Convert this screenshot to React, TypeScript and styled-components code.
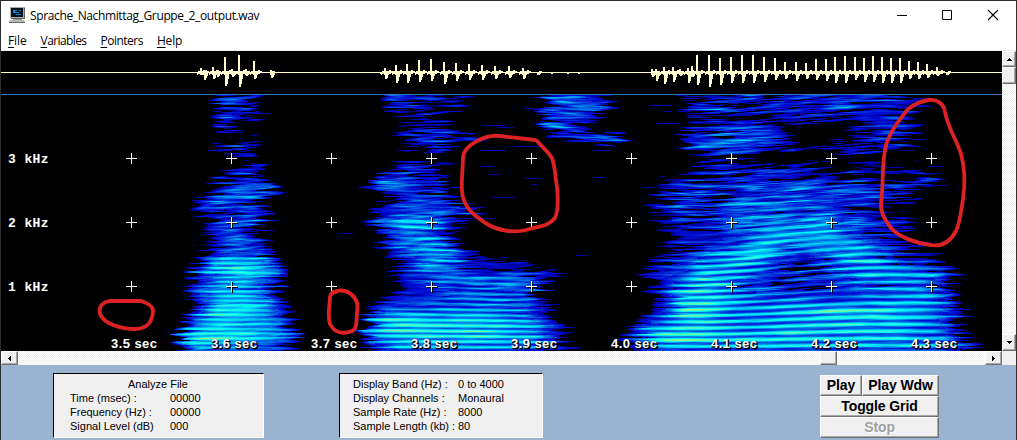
import React from "react";
import styled, { createGlobalStyle, css } from "styled-components";

const GlobalStyle = createGlobalStyle`
  * { box-sizing: border-box; }
  body { margin: 0; overflow: hidden; background: #fff; }
`;

/* ---------- Spectrogram model ---------- */

// Each row: frequency line y, followed by x,level pairs.
type Row = number[];

const wordOne: Row[] = [
  [95, 208, 0, 225, 0.35, 255, 0.35, 263, 0],
  [105, 210, 0, 225, 0.42, 250, 0.45, 265, 0],
  [114, 212, 0, 230, 0.5, 255, 0.52, 271, 0],
  [124, 212, 0, 225, 0.42, 240, 0.35, 256, 0],
  [128, 215, 0, 230, 0.15, 250, 0],
  [132, 216, 0, 230, 0.42, 250, 0.38, 258, 0],
  [138, 220, 0, 230, 0.05, 250, 0],
  [144, 213, 0, 225, 0.5, 250, 0.5, 263, 0],
  [153, 213, 0, 230, 0.42, 245, 0.4, 255, 0],
  [160, 228, 0, 240, 0.12, 250, 0.2, 262, 0],
  [172, 220, 0, 235, 0.4, 255, 0.42, 262, 0],
  [180, 204, 0, 220, 0.5, 250, 0.58, 266, 0.55, 275, 0],
  [188, 208, 0, 225, 0.55, 245, 0.68, 270, 0.62, 281, 0],
  [196, 198, 0, 215, 0.6, 235, 0.7, 250, 0.65, 262, 0.5, 275, 0],
  [203, 190, 0, 205, 0.55, 232, 0.7, 250, 0.55, 268, 0],
  [212, 192, 0, 210, 0.52, 240, 0.6, 262, 0.45, 275, 0],
  [222, 196, 0, 215, 0.55, 245, 0.6, 270, 0],
  [235, 200, 0, 215, 0.5, 240, 0.6, 268, 0],
  [250, 198, 0, 212, 0.5, 235, 0.66, 260, 0.6, 282, 0],
  [262, 196, 0, 210, 0.62, 230, 0.9, 250, 0.9, 270, 0.7, 290, 0],
  [270, 183, 0, 195, 0.55, 215, 0.88, 240, 1.05, 255, 0.95, 275, 0.6, 290, 0],
  [285, 182, 0, 195, 0.55, 215, 0.75, 240, 0.85, 260, 0.68, 285, 0],
  [300, 185, 0, 200, 0.6, 220, 0.95, 245, 0.95, 270, 0.7, 292, 0],
  [310, 185, 0, 200, 0.62, 217, 1.05, 250, 1.05, 275, 0.8, 288, 0.6, 298, 0],
  [322, 178, 0, 190, 0.7, 215, 0.93, 240, 0.9, 275, 0.7, 297, 0],
  [338, 175, 0, 181, 0.8, 198, 1.12, 235, 0.97, 270, 0.8, 290, 0.6, 299, 0],
  [350, 178, 0, 195, 0.7, 230, 0.65, 250, 0.7, 280, 0.55, 300, 0],
];

const wordTwo: Row[] = [
  [95, 376, 0, 390, 0.45, 410, 0.52, 430, 0.45, 470, 0.28, 490, 0],
  [108, 380, 0, 395, 0.48, 420, 0.5, 460, 0.3, 480, 0],
  [115, 392, 0, 405, 0.25, 425, 0.3, 440, 0],
  [124, 395, 0, 410, 0.42, 440, 0.44, 468, 0],
  [134, 388, 0, 410, 0.42, 440, 0.48, 465, 0.32, 480, 0],
  [141, 400, 0, 425, 0.44, 450, 0.44, 475, 0.42, 495, 0],
  [150, 388, 0, 415, 0.42, 440, 0.42, 448, 0],
  [155, 400, 0, 420, 0, 450, 0],
  [161, 375, 0, 400, 0.24, 440, 0.24, 475, 0],
  [168, 382, 0, 410, 0.32, 430, 0.28, 440, 0],
  [173, 374, 0, 385, 0.4, 400, 0.54, 430, 0.48, 452, 0],
  [179, 366, 0, 380, 0.52, 410, 0.6, 440, 0.45, 448, 0],
  [187, 365, 0, 385, 0.6, 408, 0.72, 430, 0.5, 460, 0],
  [194, 380, 0, 395, 0.5, 415, 0.65, 440, 0.42, 455, 0],
  [203, 375, 0, 390, 0.52, 415, 0.65, 445, 0.48, 482, 0],
  [212, 367, 0, 380, 0.55, 405, 0.74, 435, 0.66, 465, 0.32, 492, 0],
  [224, 358, 0, 380, 0.7, 405, 0.88, 425, 0.78, 450, 0.4, 478, 0],
  [234, 376, 0, 390, 0.62, 410, 0.83, 435, 0.72, 462, 0],
  [245, 376, 0, 395, 0.52, 425, 0.82, 445, 0.7, 466, 0],
  [255, 373, 0, 395, 0.44, 430, 0.8, 450, 0.7, 475, 0.2, 500, 0.1, 540, 0],
  [263, 376, 0, 395, 0.4, 430, 0.8, 452, 0.72, 480, 0.35, 520, 0.35, 545, 0],
  [272, 378, 0, 400, 0.28, 430, 0.74, 460, 0.7, 490, 0.4, 530, 0.52, 550, 0.5, 570, 0],
  [280, 380, 0, 410, 0.3, 440, 0.7, 470, 0.72, 510, 0.62, 530, 0.65, 555, 0],
  [292, 372, 0, 400, 0.36, 430, 0.54, 460, 0.76, 500, 0.76, 530, 0.65, 547, 0],
  [302, 368, 0, 385, 0.5, 410, 0.6, 450, 0.72, 490, 0.8, 530, 0.65, 552, 0],
  [312, 362, 0, 375, 0.64, 390, 0.78, 430, 0.84, 480, 0.84, 530, 0.75, 562, 0],
  [322, 360, 0, 372, 0.85, 390, 1.1, 420, 1.1, 480, 1.05, 530, 0.88, 555, 0.52, 572, 0],
  [338, 358, 0, 372, 0.8, 400, 1, 480, 1.03, 530, 0.92, 555, 0.6, 572, 0],
  [350, 358, 0, 375, 0.5, 400, 0.82, 530, 0.8, 555, 0.5, 592, 0],
];

const fricative: Row[] = [
  [95, 538, 0, 550, 0.52, 575, 0.65, 600, 0.54, 614, 0],
  [108, 535, 0, 550, 0.58, 575, 0.62, 600, 0.54, 622, 0],
  [118, 535, 0, 550, 0.52, 570, 0.52, 612, 0],
  [128, 534, 0, 550, 0.54, 570, 0.54, 592, 0],
  [134, 540, 0, 565, 0.52, 600, 0.48, 618, 0.52, 629, 0],
  [139, 545, 0, 580, 0.48, 610, 0.54, 631, 0],
  [144, 585, 0, 605, 0.42, 626, 0],
  [149, 590, 0, 605, 0, 620, 0],
];

const wordThree: Row[] = [
  [95, 665, 0, 690, 0.4, 720, 0.48, 780, 0.48, 830, 0.55, 870, 0.48, 910, 0.25, 935, 0],
  [108, 667, 0, 690, 0.45, 720, 0.5, 760, 0.5, 810, 0.56, 850, 0.58, 880, 0.5, 910, 0.38, 932, 0],
  [116, 678, 0, 700, 0.28, 740, 0.32, 780, 0.28, 820, 0.48, 850, 0.48, 900, 0.3, 935, 0],
  [126, 680, 0, 700, 0.42, 720, 0.5, 760, 0.48, 795, 0.2, 815, 0, 835, 0, 860, 0.32, 900, 0.42, 932, 0],
  [139, 677, 0, 690, 0.58, 720, 0.62, 750, 0.64, 770, 0.56, 800, 0.12, 820, 0, 850, 0.3, 880, 0.44, 932, 0],
  [147, 676, 0, 690, 0.62, 740, 0.62, 770, 0.46, 800, 0.15, 820, 0.15, 860, 0.4, 890, 0.38, 920, 0],
  [154, 683, 0, 705, 0.3, 730, 0.38, 760, 0.2, 800, 0.1, 850, 0.28, 900, 0.22, 944, 0],
  [162, 683, 0, 710, 0.38, 730, 0.3, 760, 0.17, 800, 0.1, 840, 0.22, 880, 0.18, 930, 0.1, 945, 0],
  [172, 680, 0, 700, 0.42, 730, 0.48, 770, 0.48, 800, 0.42, 840, 0.32, 870, 0.2, 920, 0.24, 942, 0],
  [184, 643, 0, 665, 0.42, 700, 0.5, 740, 0.56, 800, 0.64, 840, 0.55, 880, 0.45, 920, 0.46, 950, 0],
  [195, 645, 0, 670, 0.5, 700, 0.56, 750, 0.58, 800, 0.64, 850, 0.58, 890, 0.5, 910, 0.3, 937, 0],
  [207, 643, 0, 670, 0.48, 720, 0.6, 760, 0.7, 820, 0.68, 860, 0.5, 890, 0.32, 922, 0],
  [220, 640, 0, 665, 0.4, 710, 0.56, 760, 0.78, 820, 0.78, 855, 0.6, 890, 0.36, 925, 0],
  [232, 652, 0, 680, 0.38, 730, 0.6, 775, 0.88, 830, 0.86, 855, 0.65, 880, 0.42, 910, 0.2, 928, 0],
  [245, 652, 0, 680, 0.38, 720, 0.66, 765, 1.0, 790, 0.78, 825, 0.84, 850, 0.94, 870, 0.7, 900, 0.4, 945, 0],
  [258, 643, 0, 670, 0.42, 700, 0.72, 745, 1.08, 780, 0.72, 800, 0.5, 830, 0.75, 850, 1.02, 880, 0.88, 910, 0.5, 955, 0],
  [272, 633, 0, 655, 0.52, 680, 0.72, 705, 1.08, 750, 0.85, 790, 0.5, 820, 0.5, 860, 0.9, 900, 0.96, 935, 0.78, 966, 0],
  [286, 638, 0, 660, 0.5, 680, 0.88, 700, 1.1, 740, 0.76, 790, 0.48, 830, 0.56, 870, 0.72, 920, 0.84, 945, 0.6, 962, 0],
  [300, 645, 0, 670, 0.62, 682, 1.08, 715, 1.08, 760, 0.78, 830, 0.76, 880, 0.82, 920, 0.88, 945, 0.7, 964, 0],
  [311, 638, 0, 672, 0.8, 685, 1.18, 708, 1.18, 730, 0.88, 800, 0.98, 830, 1.14, 880, 1.1, 920, 0.95, 950, 0.7, 974, 0],
  [325, 626, 0, 645, 0.74, 670, 0.92, 690, 1.02, 740, 0.9, 820, 0.97, 900, 0.95, 940, 0.75, 967, 0],
  [338, 596, 0, 635, 0.66, 655, 1.14, 685, 1.2, 720, 1.02, 900, 1, 950, 0.82, 980, 0],
  [350, 590, 0, 640, 0.45, 670, 0.86, 930, 0.9, 965, 0.7, 985, 0],
];

const levelInRow = (row: Row, x: number) => {
  const last = row.length - 2;
  if (x <= row[1] || x >= row[last]) return 0;
  for (let i = 1; i < last; i += 2) {
    if (x < row[i + 2]) {
      const t = (x - row[i]) / (row[i + 2] - row[i]);
      return row[i + 1] + (row[i + 3] - row[i + 1]) * t;
    }
  }
  return 0;
};

const levelAt = (rows: Row[], x: number, y: number) => {
  if (y > rows[rows.length - 1][0]) return 0;
  for (let i = 0; i < rows.length - 1; i++) {
    if (y <= rows[i + 1][0]) {
      const t = (y - rows[i][0]) / (rows[i + 1][0] - rows[i][0]);
      return levelInRow(rows[i], x) * (1 - t) + levelInRow(rows[i + 1], x) * t;
    }
  }
  return 0;
};

const hash = (a: number, b: number) => {
  let h = Math.imul(a | 0, 374761393) + Math.imul(b | 0, 668265263);
  h = Math.imul(h ^ (h >>> 13), 1274126177);
  return ((h ^ (h >>> 16)) >>> 0) / 4294967295;
};

const streak = (x: number, row: number, size: number) => {
  const sx = x / size + hash(row, 91) * 9;
  const i = Math.floor(sx);
  const t = sx - i;
  const s = t * t * (3 - 2 * t);
  return hash(i, row) * (1 - s) + hash(i + 1, row) * s;
};

const smoothStreak = (x: number, y: number, size: number) => {
  const j = Math.floor(y);
  const t = y - j;
  const s = t * t * (3 - 2 * t);
  return streak(x, j, size) * (1 - s) + streak(x, j + 1, size) * s;
};

const mix = (stops: number[][], v: number) => {
  for (let i = 1; i < stops.length; i++) {
    if (v <= stops[i][0]) {
      const t = (v - stops[i - 1][0]) / (stops[i][0] - stops[i - 1][0]);
      const c = [1, 2, 3].map((k) => Math.round(stops[i - 1][k] + (stops[i][k] - stops[i - 1][k]) * t));
      return `rgb(${c.join(",")})`;
    }
  }
  return "rgb(180,240,110)";
};

const palette = [
  [0, 0, 0, 0],
  [0.08, 0, 0, 80],
  [0.2, 0, 0, 180],
  [0.36, 0, 14, 214],
  [0.52, 0, 66, 222],
  [0.68, 0, 122, 230],
  [0.83, 0, 190, 242],
  [0.97, 0, 242, 250],
  [1.1, 50, 255, 215],
  [1.25, 150, 245, 130],
];

const LEVELS = 40;

const buildSpectrum = () => {
  const paths: string[] = Array.from({ length: LEVELS + 1 }, () => "");
  for (let y = 95; y < 351; y++) {
    let runStart = 170;
    let runLevel = 0;
    for (let x = 170; x <= 1002; x++) {
      // Ragged outlines: every frequency line starts and ends a little differently.
      const px = x + (smoothStreak(x, y * 0.7 + 900, 70) - 0.5) * 24;
      let base = 0;
      let pitch = 4.7;
      let drift = 0;
      let depth = 0.3;
      if (x < 320) {
        base = levelAt(wordOne, px, y);
        drift = (x - 240) * 0.04;
      } else if (y < 152 && x > 515 && x < 648) {
        base = levelAt(fricative, px, y);
        drift = (x - 580) * -0.04;
        depth = 0.2;
      } else if (x < 600 && !(y > 325 && x > 588)) {
        base = levelAt(wordTwo, px, y);
        pitch = 5.5 - (x - 380) * 0.0018;
        depth = y > 285 ? 0.46 : 0.28;
        drift = (x - 400) * 0.02;
      } else {
        base = levelAt(wordThree, px, y);
        const u = Math.min(1, Math.max(0, (x - 690) / 190));
        pitch = 6.1 + 0.95 * u * u * (3 - 2 * u);
        depth = y > 255 ? 0.54 : 0.36;
        drift = u * u * (3 - 2 * u) * 9;
        // Upper harmonics flatten out so that the lines stay nearly level there.
        if (y < 250) pitch = 6.5 + (pitch - 6.5) * Math.max(0.3, 1 - (250 - y) / 60);
      }
      let v = 0;
      if (base > 0.01) {
        const wave = 0.5 + 0.5 * Math.cos((2 * Math.PI * (352 - y)) / pitch);
        const clarity = y > 290 ? 0.5 : y > 230 ? 0.72 : 0.92;
        const n =
          smoothStreak(x, (y + drift) * 0.55, 26) * 0.5 +
          smoothStreak(x + 400, (y + drift) * 0.98 + 500, 16) * 0.5;
        const edge = Math.min(1, base / 0.22);
        v =
          base +
          (n - 0.54) * 1.25 * clarity * (base > 0.8 ? 0.5 : base > 0.6 ? 0.75 : 1) -
          (1 - wave) * depth * (base > 0.7 ? 1 : 0.62) +
          (base > 0.75 ? 0.09 : base > 0.6 ? 0.04 : -0.02);
        v *= edge;
        if (v < 0.11) v = 0;
      }
      const level = x === 1002 ? -1 : Math.max(0, Math.min(LEVELS, Math.round((v / 1.25) * LEVELS)));
      if (level !== runLevel) {
        if (runLevel > 0) paths[runLevel] += `M${runStart} ${y}h${x - runStart}v1h${runStart - x}z`;
        runStart = x;
        runLevel = level;
      }
    }
  }
  return paths;
};

const spectrum = buildSpectrum();

// Isolated faint traces: x, y, length.
const traces = [
  [524, 108, 12], [484, 125, 22], [498, 127, 16], [480, 150, 26], [514, 146, 26], [594, 150, 15], [480, 166, 13], [489, 174, 10],
  [525, 178, 14], [593, 177, 12], [531, 184, 6], [491, 197, 24], [650, 105, 22], [663, 111, 9], [656, 123, 24], [652, 220, 20],
  [576, 255, 10], [339, 233, 14], [450, 187, 13], [932, 173, 10], [926, 185, 22],
  [460, 207, 26], [462, 218, 34], [455, 209, 20], [930, 166, 14],
];

/* ---------- Waveform ---------- */

// x position, peak above the axis, trough below the axis.
const pulses = [
  [201, 5, 2], [204, 3, 7], [213, 6, 6], [217, 3, 4], [225, 16, 13], [232, 4, 4], [239, 18, 14], [246, 4, 3], [254, 12, 6], [271, 3, 5],
  [385, 5, 6], [396, 8, 10], [407, 9, 10], [419, 13, 9], [431, 14, 8], [444, 11, 11], [456, 10, 8], [469, 9, 7], [482, 8, 7],
  [495, 7, 6], [509, 7, 5], [523, 5, 6], [538, 1, 2],
  [652, 4, 4], [656, 4, 8], [664, 6, 11], [673, 6, 9], [680, 4, 3], [688, 5, 10], [692, 7, 4], [697, 18, 12], [709, 18, 14], [720, 15, 12],
  [731, 16, 10], [742, 18, 10], [753, 18, 10], [764, 16, 9], [775, 15, 7], [785, 11, 6], [796, 11, 8], [806, 10, 6], [816, 14, 7],
  [826, 14, 8], [835, 16, 10], [845, 17, 10], [855, 16, 7], [864, 15, 9], [873, 17, 9], [882, 16, 10], [891, 15, 10], [900, 15, 10],
  [909, 12, 6], [918, 11, 6], [927, 9, 5], [937, 6, 3], [947, 1, 2],
];

const wavePath = pulses
  .map(([x, up, down]) => {
    const bits = [
      `M${x - 1} ${73 - up}h2v${up + 2}h-2z`,
      `M${x} 72h2v${down + 1}h-2z`,
      `M${x + 1} 71h2v${Math.ceil(down * 0.85) + 1}h-2z`,
      `M${x + 2} 71h2v${Math.ceil(down * 0.5) + 1}h-2z`,
    ];
    if (up > 4) {
      bits.push(`M${x + 4} 70h2v4h-2z`, `M${x - 3} 71h2v3h-2z`, `M${x + 6} 71h2v2h-2z`, `M${x - 4} 72h1v3h-1z`);
    }
    return bits.join("");
  })
  .join("");

const gridX = [131, 231, 331, 431, 531, 631, 731, 831, 931];
const gridY = [158, 222, 286];

const Plot = () => (
  <PlotSvg viewBox="1 51 1001 300">
    <rect x="1" y="51" width="1001" height="300" fill="#000" />
    <g shapeRendering="crispEdges">
      {spectrum.map((d, i) => (d ? <path key={i} d={d} fill={mix(palette, (i / LEVELS) * 1.25)} /> : null))}
      {traces.map(([x, y, w]) => (
        <path key={`${x}-${y}`} d={`M${x} ${y}h${w}v1h${-w}z`} fill="#0000b4" />
      ))}
      <path d="M1 72h1001v1H1zM380 73h2v1h-2zM551 73h2v1h-2zM567 73h2v1h-2zM578 73h2v1h-2z" fill="#ffffd0" />
      <path d={wavePath} fill="#ffffd0" />
      <rect x="1" y="94" width="1001" height="1" fill="#2a78c0" />
      {gridX.map((x) =>
        gridY.map((y) => (
          <g key={`${x}-${y}`}>
            <path d={`M${x - 4} ${y + 1}h11v1h-11zM${x + 1} ${y - 4}h1v11h-1z`} fill="#000" />
            <path d={`M${x - 5} ${y}h11v1h-11zM${x} ${y - 5}h1v11h-1z`} fill="#fff" />
          </g>
        )),
      )}
    </g>
    {[3, 2, 1].map((n, i) => (
      <AxisLabel key={n} x="8" y={163 + i * 64}>
        {n}
        <tspan x="24.5" textLength="24" lengthAdjust="spacing">kHz</tspan>
      </AxisLabel>
    ))}
    {gridX.map((x, i) => {
      const label = `${(3.5 + i / 10).toFixed(1)} sec`;
      return (
        <g key={x}>
          <TimeLabel x={x - 19} y="349" fill="#000" stroke="#000" textLength="46">{label}</TimeLabel>
          <TimeLabel x={x - 20} y="348" fill="#fff" textLength="46">{label}</TimeLabel>
        </g>
      );
    })}
    <g fill="none" stroke="#dc2222" strokeWidth="3.8" strokeLinecap="round" strokeLinejoin="round">
      <path d="M109 301H141C150 304 154 307 153 312C152 323 147 328 136 329C121 329 104 324 100 314C98 307 103 302 109 301Z" />
      <path d="M333 292C341 289 347 291 351 294C358 300 358 305 357 313C356 323 358 331 349 332C341 334 334 332 330 324C327 315 330 304 330 297Q331 292 336 292" />
      <path d="M535 140L500 136C484 134 464 146 463 157C463 169 461 182 462 191C463 208 475 216 487 224C499 231 515 233 526 230C538 226 548 227 555 218C559 209 558 197 557 187C555 176 555 165 552 158C547 150 542 147 537 141" />
      <path d="M929 100C937 99 944 104 945 112C948 128 957 141 961 154C965 168 965 185 963 199C961 211 960 223 956 231C950 242 942 247 931 245C915 243 899 237 891 228C883 218 880 211 881 203C884 184 881 159 887 142C893 126 901 119 907 110C914 104 921 101 929 100Z" />
    </g>
  </PlotSvg>
);

/* ---------- Window chrome ---------- */

const Window = styled.div`
  width: 1017px;
  height: 440px;
  display: flex;
  flex-direction: column;
  background: #fff;
  border: solid #2d2d30;
  border-width: 1px 1px 0 1px;
  overflow: hidden;
`;

const TitleBar = styled.header`
  height: 30px;
  display: flex;
  align-items: center;
  padding: 0 17px 2px 8px;
`;

const Title = styled.h1`
  flex: 1;
  margin: 2px 0 0 4px;
  font: 400 12px/16px "Open Sans", sans-serif;
  letter-spacing: -0.37px;
  color: #000;
`;

const WindowControls = styled.div`
  display: flex;
  align-items: center;
  gap: 34px;
  svg { display: block; }
`;

const MenuBar = styled.nav`
  height: 20px;
  display: flex;
  gap: 14px;
  padding: 1px 7px 0;
  border-bottom: 1px solid #f0f0f0;
  font: 400 12px/18px "Open Sans", sans-serif;
  color: #000;
`;

const MenuItem = styled.span<{ $tracking?: number }>`
  letter-spacing: ${(p) => p.$tracking ?? 0}px;
  u { text-underline-offset: 2px; text-decoration-thickness: 1px; }
`;

const Viewer = styled.main`
  display: grid;
  grid-template-columns: 1001px 14px;
  grid-template-rows: 300px 14px;
`;

const PlotSvg = styled.svg`
  display: block;
  width: 1001px;
  height: 300px;
`;

const AxisLabel = styled.text`
  font: 700 13px "Liberation Mono", monospace;
  fill: #fff;
`;

const TimeLabel = styled.text`
  font: 700 13px "Liberation Sans", sans-serif;
`;

const Track = styled.div<{ $vertical?: boolean }>`
  display: flex;
  flex-direction: ${(p) => (p.$vertical ? "column" : "row")};
  background: repeating-conic-gradient(#f0f0f0 0 25%, #fff 0 50%) 0 0 / 2px 2px;
`;

const Corner = styled.div`
  background: #f0f0f0;
`;

const raised = css`
  background: #f0f0f0;
  border: 1px solid;
  border-color: #fff #707070 #707070 #fff;
  box-shadow: inset -1px -1px #a8a8a8;
`;

const ScrollPart = styled.div<{ $w: number; $h: number }>`
  ${raised}
  flex: none;
  width: ${(p) => p.$w}px;
  height: ${(p) => p.$h}px;
  display: flex;
  align-items: center;
  justify-content: center;
`;

const Gap = styled.div<{ $size?: number }>`
  flex: ${(p) => (p.$size ? `0 0 ${p.$size}px` : "1")};
`;

const ControlPanel = styled.footer`
  flex: 1;
  display: flex;
  align-items: flex-start;
  padding: 8px 0 0 52px;
  background: #99b3d0;
`;

const InfoBox = styled.section<{ $width: number; $left: number; $label: number }>`
  width: ${(p) => p.$width}px;
  height: 65px;
  padding: 3px 0 0 ${(p) => p.$left}px;
  background: #f0f0f0;
  border: 1px solid;
  border-color: #000 #fff #fff #000;
  display: grid;
  grid-template-columns: ${(p) => p.$label}px 1fr;
  grid-auto-rows: 14px;
  font: 400 11px/14px "Liberation Sans", Arial, sans-serif;
  color: #000;
  white-space: nowrap;

  & + & { margin-left: 75px; }
`;

const BoxTitle = styled.div`
  grid-column: 1 / -1;
  padding-left: 58px;
`;

const Buttons = styled.div`
  display: grid;
  grid-template-columns: 42px 77px;
  grid-auto-rows: 21px;
  margin: 2px 0 0 277px;
`;

const PushButton = styled.button<{ $wide?: boolean }>`
  ${raised}
  grid-column: ${(p) => (p.$wide ? "1 / -1" : "auto")};
  padding: 0 0 1px;
  font: 700 14px/16px "Liberation Sans", Arial, sans-serif;
  letter-spacing: -0.1px;
  white-space: nowrap;
  color: #000;

  &:disabled {
    color: #a0a0a0;
    text-shadow: 1px 1px #fff;
  }
`;

const Arrow = ({ d }: { d: string }) => (
  <svg width="7" height="7" viewBox="0 0 7 7" shapeRendering="crispEdges">
    <path d={d} fill="#000" />
  </svg>
);

const AppIcon = () => (
  <svg width="17" height="16" viewBox="0 0 17 16">
    <path d="M1 0h15v11H1z" fill="#a9aca9" />
    <path d="M15 1h1v11H2v-1h13z" fill="#606560" />
    <path d="M2 1h12v9H2z" fill="#07131f" />
    <path d="M4 3h4v1H4zM4 4h2v2H4zM6 5h4v1H6zM10 3h2v1h-2zM7 7h5v1H7z" fill="#1688d8" />
    <path d="M4 12h9v1H4z" fill="#8a8e8a" />
    <path d="M1 13h14l1 2H0z" fill="#b8bab4" />
    <path d="M0 15h16v1H0z" fill="#686c68" />
  </svg>
);

export default function App() {
  return (
    <>
      <GlobalStyle />
      <Window>
        <TitleBar>
          <AppIcon />
          <Title>Sprache_Nachmittag_Gruppe_2_output.wav</Title>
          <WindowControls>
            <svg width="12" height="12" shapeRendering="crispEdges"><path d="M2 6h10v1H2z" /></svg>
            <svg width="12" height="12"><path d="M1.5 1.5h9v9h-9z" fill="none" stroke="#000" /></svg>
            <svg width="12" height="12"><path d="M1 1l10 10M11 1L1 11" stroke="#000" strokeWidth="1.1" /></svg>
          </WindowControls>
        </TitleBar>
        <MenuBar>
          <MenuItem $tracking={-0.1}><u>F</u>ile</MenuItem>
          <MenuItem $tracking={-0.6}><u>V</u>ariables</MenuItem>
          <MenuItem $tracking={-0.5}><u>P</u>ointers</MenuItem>
          <MenuItem $tracking={-0.2}><u>H</u>elp</MenuItem>
        </MenuBar>
        <Viewer>
          <Plot />
          <Track $vertical>
            <ScrollPart $w={14} $h={16}><Arrow d="M3 2h1v1h1v1h1v1H1V4h1V3h1z" /></ScrollPart>
            <ScrollPart $w={14} $h={17} />
            <Gap />
            <ScrollPart $w={14} $h={17}><Arrow d="M1 2h5v1H5v1H4v1H3V4H2V3H1z" /></ScrollPart>
          </Track>
          <Track>
            <ScrollPart $w={17} $h={14}><Arrow d="M5 1v5H4V5H3V4H2V3h1V2h1V1z" /></ScrollPart>
            <Gap $size={802} />
            <ScrollPart $w={17} $h={14} />
            <Gap />
            <ScrollPart $w={17} $h={14}><Arrow d="M2 1v5h1V5h1V4h1V3H4V2H3V1z" /></ScrollPart>
          </Track>
          <Corner />
        </Viewer>
        <ControlPanel>
          <InfoBox $width={211} $left={16} $label={100}>
            <BoxTitle>Analyze File</BoxTitle>
            <span>Time (msec) :</span><span>00000</span>
            <span>Frequency (Hz) :</span><span>00000</span>
            <span>Signal Level (dB)</span><span>000</span>
          </InfoBox>
          <InfoBox $width={204} $left={13} $label={105}>
            <span>Display Band (Hz) :</span><span>0 to 4000</span>
            <span>Display Channels :</span><span>Monaural</span>
            <span>Sample Rate (Hz) :</span><span>8000</span>
            <span>Sample Length (kb) :</span><span>80</span>
          </InfoBox>
          <Buttons>
            <PushButton>Play</PushButton>
            <PushButton>Play Wdw</PushButton>
            <PushButton $wide>Toggle Grid</PushButton>
            <PushButton $wide disabled>Stop</PushButton>
          </Buttons>
        </ControlPanel>
      </Window>
    </>
  );
}
